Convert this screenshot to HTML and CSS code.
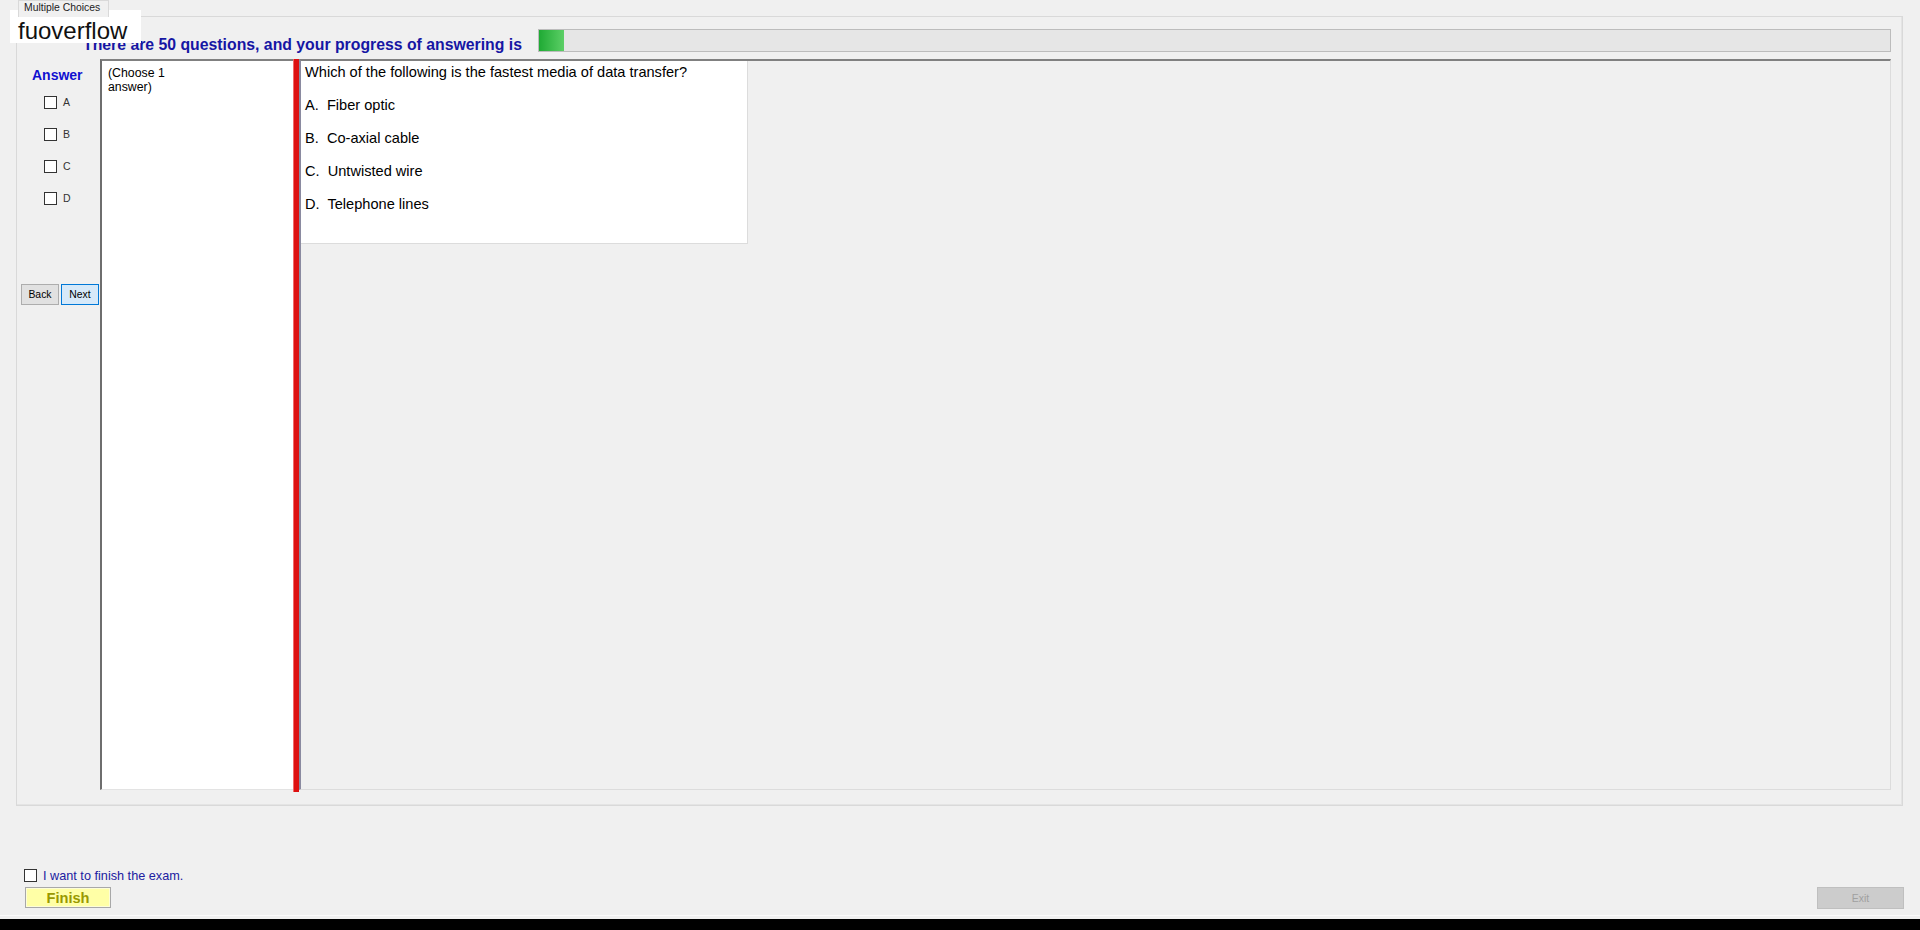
FILE: index.html
```html
<!doctype html>
<html><head>
    <title>Multiple Choices</title>
    <meta charset="utf-8">
    <link rel="stylesheet" href="styles.css">
</head><body>
    <div class="tabstrip">
        <div class="tab">Multiple Choices</div>
    </div>
    <div class="tabpage">
        <div class="head">
            <div class="head-text">There are 50 questions, and your progress of answering is</div>
            <div class="progress"><div class="progress-fill" style="width:25px"></div></div>
        </div>
        <div class="main">
            <div class="answers">
                <div class="answer-title">Answer</div>
                <div class="choices">
                    <div class="choice"><span class="box"></span><span>A</span></div>
                    <div class="choice"><span class="box"></span><span>B</span></div>
                    <div class="choice"><span class="box"></span><span>C</span></div>
                    <div class="choice"><span class="box"></span><span>D</span></div>
                </div>
                <div class="nav">
                    <button class="btn">Back</button>
                    <button class="btn next">Next</button>
                </div>
            </div>
            <div class="split">
                <div class="choose">(Choose 1<br>answer)</div>
                <div class="splitter"></div>
                <div class="qpanel">
                    <div class="question">
                        <p class="q">Which of the following is the fastest media of data transfer?</p>
                        <p class="opt">A.&nbsp; Fiber optic</p>
                        <p class="opt">B.&nbsp; Co-axial cable</p>
                        <p class="opt">C.&nbsp; Untwisted wire</p>
                        <p class="opt">D.&nbsp; Telephone lines</p>
                    </div>
                </div>
            </div>
        </div>
    </div>
    <div class="footer">
        <div class="finish-check"><span class="box"></span><span>I want to finish the exam.</span></div>
        <div class="footer-row">
            <button class="finish">Finish</button>
            <button class="exit">Exit</button>
        </div>
    </div>
    <div class="sep"></div>
    <div class="taskbar"></div>
    <div class="brand">fuoverflow</div>
</body></html>
```

FILE: styles.css
```css
* {
    box-sizing: border-box;
}

body {
    margin: 0;
    width: 1920px;
    height: 930px;
    overflow: hidden;
    position: relative;
    background: #f0f0f0;
    font-family: 'Liberation Sans', Arial, sans-serif;
    color: #000;
}

.tabstrip {
    height: 16px;
    padding-left: 18px;
    display: flex;
}

.tab {
    position: relative;
    z-index: 1;
    width: 91px;
    height: 17px;
    border: 1px solid #d9d9d9;
    border-bottom: none;
    background: #f0f0f0;
    font-size: 10.4px;
    line-height: 13px;
    padding-left: 5px;
    color: #222;
}

.tabpage {
    margin-left: 16px;
    width: 1887px;
    height: 790px;
    border: 1px solid #d9d9d9;
    box-shadow: inset -5px -5px 0 -4px #e4e4e4;
    padding-right: 11px;
}

.head {
    margin-top: 12px;
    height: 23px;
    display: flex;
    padding-left: 66px;
}

.head-text {
    width: 455px;
    flex: none;
    padding-top: 7px;
    font-weight: bold;
    font-size: 15.8px;
    line-height: 18px;
    color: #1616a4;
    white-space: nowrap;
}

.progress {
    flex: 1;
    height: 23px;
    border: 1px solid #bcbcbc;
    background: #e6e6e6;
}

.progress-fill {
    height: 100%;
    background: linear-gradient(to right, #1faa34, #5ccf66);
}

.main {
    margin-top: 7px;
    height: 731px;
    display: flex;
}

.answers {
    width: 83px;
    flex: none;
}

.answer-title {
    margin: 8px 0 0 15px;
    font-weight: bold;
    font-size: 14px;
    line-height: 16px;
    color: #1010d0;
}

.choices {
    margin-top: 13px;
}

.choice {
    height: 32px;
    display: flex;
    gap: 6px;
    padding-left: 27px;
    font-size: 10.5px;
    line-height: 13px;
    color: #333;
}

.box {
    width: 13px;
    height: 13px;
    flex: none;
    border: 1px solid #333;
    background: #fff;
}

.nav {
    margin-top: 60px;
    padding-left: 4px;
    display: flex;
    gap: 2px;
}

.btn {
    width: 38px;
    height: 21px;
    padding: 0;
    border: 1px solid #adadad;
    background: #e1e1e1;
    font-family: inherit;
    font-size: 10.4px;
    color: #000;
}

.btn.next {
    border-color: #0078d7;
    background: #d6e9f9;
}

.split {
    flex: 1;
    display: flex;
}

.choose {
    width: 193px;
    flex: none;
    background: #fff;
    border-top: 2px solid #808080;
    border-left: 2px solid #6e6e6e;
    border-bottom: 1px solid #e3e3e3;
    padding: 5px 0 0 6px;
    font-size: 12.3px;
    line-height: 14px;
}

.splitter {
    width: 6px;
    flex: none;
    margin-bottom: -2px;
    background: #dd1111;
    box-shadow: inset 1px 0 0 #f06a6a;
}

.qpanel {
    flex: 1;
    border-top: 2px solid #808080;
    border-left: 2px solid #8a8aa0;
    border-right: 1px solid #dcdcdc;
    border-bottom: 1px solid #dcdcdc;
}

.question {
    width: 447px;
    height: 183px;
    background: #fff;
    border-right: 1px solid #dcdcdc;
    border-bottom: 1px solid #dcdcdc;
    padding-left: 4px;
    font-size: 14.6px;
    line-height: 20px;
}

.question p {
    margin: 0;
}

.q {
    padding-top: 1px;
}

.opt {
    margin-top: 13px !important;
}

.footer {
    margin-top: 63px;
    padding: 0 16px 0 24px;
}

.finish-check {
    display: flex;
    align-items: center;
    gap: 6px;
    height: 13px;
    font-size: 12.7px;
    color: #2020a0;
}

.footer-row {
    margin-top: 5px;
    display: flex;
    justify-content: space-between;
}

.finish {
    margin-left: 1px;
    width: 86px;
    height: 21px;
    padding: 0;
    border: 1px solid #a8a8a8;
    box-shadow: inset 0 0 0 1px #fdfdd8;
    background: #ffffa6;
    font-family: inherit;
    font-weight: bold;
    font-size: 14.6px;
    color: #999900;
}

.exit {
    width: 87px;
    height: 22px;
    padding: 0;
    border: 1px solid #bfbfbf;
    background: #cccccc;
    font-family: inherit;
    font-size: 10.4px;
    color: #a0a0a0;
}

.sep {
    margin-top: 6px;
    height: 1px;
    background: #fbfbfb;
}

.taskbar {
    margin-top: 3px;
    height: 12px;
    background: #000;
}

.brand {
    position: absolute;
    left: 10px;
    top: 10px;
    width: 131px;
    height: 33px;
    background: #fff;
    padding-left: 8px;
    font-size: 24px;
    line-height: 42px;
    color: #111;
}
```
